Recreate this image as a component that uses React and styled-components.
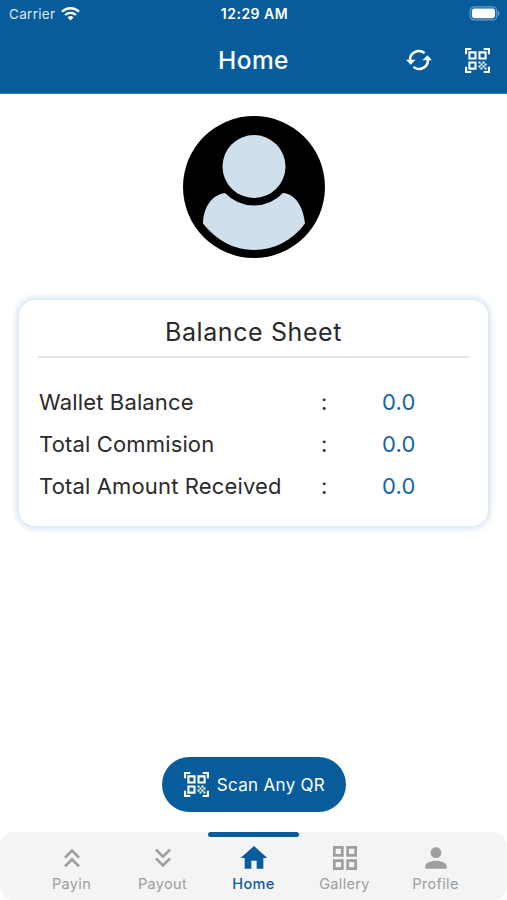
import React from 'react';
import styled, { createGlobalStyle } from 'styled-components';
import {
  MdKeyboardDoubleArrowUp,
  MdKeyboardDoubleArrowDown,
  MdHome,
  MdGridView,
  MdPerson,
} from 'react-icons/md';

const GlobalStyle = createGlobalStyle`
  :root {
    --brand-color: #085c9c;
    --muted-color: #9e9e9e;
  }
  * {
    box-sizing: border-box;
  }
  body {
    margin: 0;
    background: #fff;
    font-family: Inter, "Liberation Sans", sans-serif;
  }
  svg {
    display: block;
    flex: none;
  }
`;

const Screen = styled.div`
  display: flex;
  flex-direction: column;
  width: 100%;
  height: 100vh;
  overflow: hidden;
`;

const Header = styled.header`
  height: 94px;
  color: #fff;
  background: var(--brand-color);
  border-bottom: 1px solid #3a7fb8;
`;

const StatusBar = styled.div`
  display: grid;
  grid-template-columns: 1fr auto 1fr;
  align-items: center;
  height: 27px;
  padding: 0 7px 0 9px;
  font-size: 14px;
`;

const Carrier = styled.div`
  display: flex;
  align-items: center;
  gap: 6px;
  color: #dce9f3;
  font-size: 13.5px;
  letter-spacing: .3px;
`;

const Clock = styled.div`
  font-weight: 600;
  letter-spacing: .5px;
`;

const BatterySlot = styled.div`
  justify-self: end;
`;

const TitleBar = styled.div`
  display: grid;
  grid-template-columns: 1fr auto 1fr;
  align-items: center;
  height: 66px;
  padding: 0 17px;
`;

const Title = styled.h1`
  grid-column: 2;
  margin: 0;
  font-size: 24.5px;
  font-weight: 500;
  letter-spacing: .4px;
`;

const Actions = styled.div`
  display: flex;
  justify-content: flex-end;
  align-items: center;
  gap: 33px;
`;

const Content = styled.main`
  flex: 1;
  display: flex;
  flex-direction: column;
  align-items: center;
  padding: 21.5px 19px 20px;
`;

const Card = styled.section`
  width: 100%;
  height: 226px;
  margin-top: 42.5px;
  padding: 0 19px;
  border-radius: 16px;
  background: #fff;
  box-shadow: 0 0 7px 2px #cfdeee;
`;

const CardTitle = styled.h2`
  height: 58px;
  margin: 0 0 23px;
  border-bottom: 2px solid #e4e5e6;
  color: #2a2a2a;
  font-size: 25px;
  font-weight: 400;
  line-height: 65px;
  letter-spacing: .6px;
  text-align: center;
`;

const BalanceRow = styled.div`
  display: grid;
  grid-template-columns: 282px 61px 1fr;
  padding-left: 1px;
  color: #2a2a2a;
  font-size: 22px;
  line-height: 42px;
  letter-spacing: .15px;
`;

const Amount = styled.span`
  color: #1565a5;
`;

const ScanButton = styled.button`
  display: flex;
  align-items: center;
  justify-content: center;
  gap: 8px;
  width: 184px;
  height: 55px;
  margin-top: auto;
  padding: 0 0 0 2px;
  border: 0;
  border-radius: 28px;
  color: #fff;
  background: var(--brand-color);
  font-family: inherit;
  font-size: 17px;
  letter-spacing: .3px;
`;

const TabBar = styled.nav`
  display: grid;
  grid-template-columns: repeat(5, 91px);
  justify-content: center;
  height: 68px;
  border-radius: 14px;
  background: #f4f4f4;
`;

const Tab = styled.a`
  display: flex;
  flex-direction: column;
  align-items: center;
  color: ${props => (props.$active ? 'var(--brand-color)' : 'var(--muted-color)')};
  font-size: 14.5px;
  font-weight: ${props => (props.$active ? 500 : 400)};
  line-height: 20px;
  letter-spacing: .35px;
  &:before {
    content: "";
    width: 100%;
    height: 5px;
    margin-bottom: 5px;
    border-radius: 3px;
    background: ${props => (props.$active ? 'var(--brand-color)' : 'transparent')};
  }
`;

const WifiIcon = () => (
  <svg width="19" height="14" viewBox="0 0 19 14" fill="none" stroke="#fff">
    <path d="M1 4.7a12.2 12.2 0 0 1 17 0" strokeWidth="2.5" />
    <path d="M4.1 8a7.8 7.8 0 0 1 10.8 0" strokeWidth="2.3" />
    <path d="M6.6 10.5a4.2 4.2 0 0 1 5.8 0L9.5 13.5z" fill="#fff" stroke="none" />
  </svg>
);

const BatteryIcon = () => (
  <svg width="31" height="15" viewBox="0 0 31 15">
    <rect x="1.2" y=".9" width="26.6" height="13" rx="4" fill="none" stroke="#6f9fc7" strokeWidth="1.2" />
    <rect x="2.9" y="2.6" width="23.2" height="9.6" rx="2.4" fill="#fff" />
    <path d="M29 5v5c1.9-.8 1.9-4.2 0-5z" fill="#6f9fc7" />
  </svg>
);

const SyncIcon = () => (
  <svg width="26" height="22" viewBox="0 0 26 22" fill="none" stroke="#fff" strokeWidth="2.5">
    <path d="M4.1 12a8.9 8.9 0 0 1 14.5-7.9" />
    <path d="M21.9 10a8.9 8.9 0 0 1-14.5 7.9" />
    <path d="M0 10.8h9.6l-5 5z" fill="#fff" stroke="none" />
    <path d="M16.4 11.2H26l-4.6-5z" fill="#fff" stroke="none" />
  </svg>
);

const QrScanIcon = () => (
  <svg width="25" height="25" viewBox="0 0 25 25" fill="none" stroke="currentColor" strokeWidth="2.1">
    <path d="M1.05 6.3V1.05H6.3M18.7 1.05h5.25V6.3M23.95 18.7v5.25H18.7M6.3 23.95H1.05V18.7" />
    <path d="M4.4 4.4h6.1v6.1H4.4zM14.5 4.4h6.1v6.1h-6.1zM4.4 14.5h6.1v6.1H4.4z" />
    <path
      d="M13.5 13.5h2v2h-2zM17.5 13.5h2v2h-2zM15.5 15.5h2v2h-2zM19.5 15.5h2v2h-2zM13.5 17.5h2v2h-2zM17.5 17.5h2v2h-2zM15.5 19.5h2v2h-2zM19.5 19.5h2v2h-2z"
      fill="currentColor"
      stroke="none"
    />
  </svg>
);

const Avatar = () => (
  <svg width="142" height="142" viewBox="0 0 142 142">
    <circle cx="71" cy="71" r="71" />
    <circle cx="71" cy="50.5" r="31.5" fill="#cfe0ec" />
    <path
      d="M42 77C28 79 20.5 92 20 107.5C34 125 51 134 71 134S109 125 122 107.5C120.500 92 113 78 100 77Q88 89.500 71 89.500T42 77z"
      fill="#cfe0ec"
    />
  </svg>
);

const balances = ['Wallet Balance', 'Total Commision', 'Total Amount Received'];

const tabs = [
  { name: 'Payin', Icon: MdKeyboardDoubleArrowUp },
  { name: 'Payout', Icon: MdKeyboardDoubleArrowDown },
  { name: 'Home', Icon: MdHome, active: true },
  { name: 'Gallery', Icon: MdGridView },
  { name: 'Profile', Icon: MdPerson },
];

const App = () => {
  return (
    <Screen>
      <GlobalStyle />
      <Header>
        <StatusBar>
          <Carrier>
            Carrier
            <WifiIcon />
          </Carrier>
          <Clock>12:29 AM</Clock>
          <BatterySlot>
            <BatteryIcon />
          </BatterySlot>
        </StatusBar>
        <TitleBar>
          <Title>Home</Title>
          <Actions>
            <SyncIcon />
            <QrScanIcon />
          </Actions>
        </TitleBar>
      </Header>
      <Content>
        <Avatar />
        <Card>
          <CardTitle>Balance Sheet</CardTitle>
          {balances.map(name => (
            <BalanceRow key={name}>
              <span>{name}</span>
              <span>:</span>
              <Amount>0.0</Amount>
            </BalanceRow>
          ))}
        </Card>
        <ScanButton>
          <QrScanIcon />
          Scan Any QR
        </ScanButton>
      </Content>
      <TabBar>
        {tabs.map(({ name, Icon, active }) => (
          <Tab key={name} $active={active}>
            <Icon size={32} />
            {name}
          </Tab>
        ))}
      </TabBar>
    </Screen>
  );
};

export default App;
